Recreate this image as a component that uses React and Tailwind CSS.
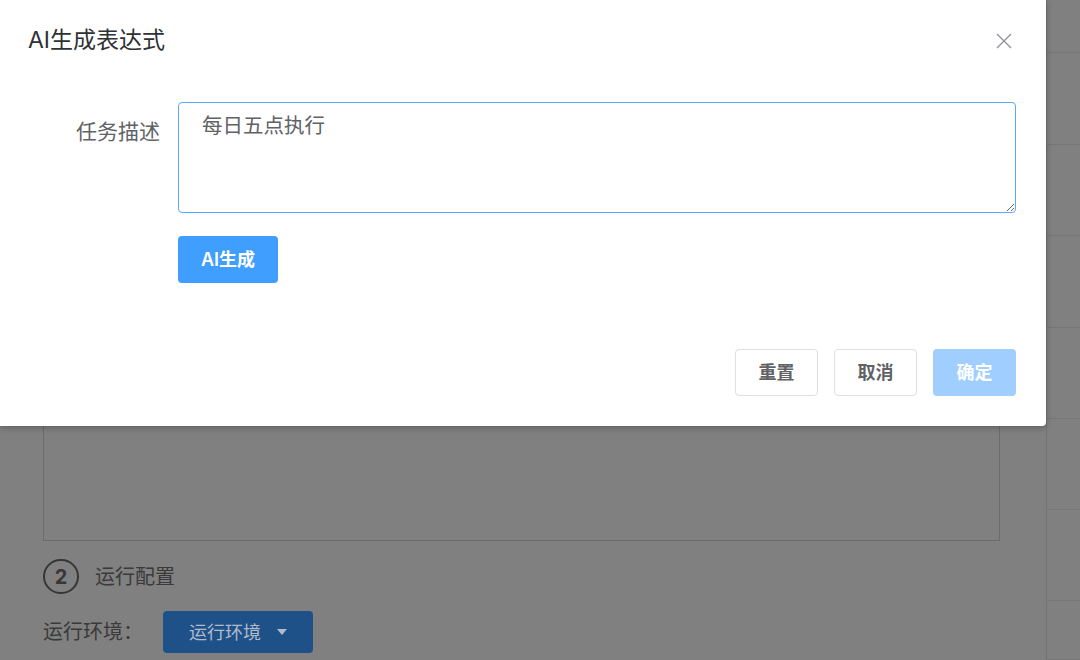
import React from "react";

const font = { fontFamily: '"Inter", "Liberation Sans", "Noto Sans CJK SC", sans-serif' };

function SideRows() {
  const rows = [54, 93, 92, 93, 93, 92, 92, 60];
  return (
    <div className="flex w-[34px] flex-col border-l border-[#737373]">
      {rows.map((h, i) => (
        <div key={i} className="border-b border-[#777777]" style={{ height: h }} />
      ))}
    </div>
  );
}

function Modal() {
  return (
    <div className="absolute left-0 top-0 h-[426px] w-[1046px] rounded-br bg-white shadow-[0_2px_6px_rgba(0,0,0,0.25)]">
      <div className="flex items-center justify-between pl-[28px] pr-[34px] pt-[25px]">
        <h2 className="text-[23px] leading-[30px] text-[#303133]">AI生成表达式</h2>
        <svg width="16" height="16" viewBox="0 0 16 16" className="mt-[2px]">
          <path d="M1 1 L15 15 M15 1 L1 15" stroke="#909399" strokeWidth="1.4" />
        </svg>
      </div>

      <div className="mt-[47px] flex pr-[30px]">
        <label className="w-[160px] shrink-0 pt-[16px] text-right text-[21px] leading-[28px] text-[#606266]">
          任务描述
        </label>
        <div className="ml-[18px] flex flex-1 flex-col">
          <textarea
            readOnly
            value="每日五点执行"
            className="h-[111px] w-full resize-y rounded border border-[#5aa9ff] px-[23px] py-[9px] text-[20.5px] leading-[28px] text-[#606266] outline-none"
            style={font}
          />
          <div className="mt-[23px]">
            <button className="h-[47px] w-[100px] rounded bg-[#409eff] text-[18px] font-semibold text-white">
              AI生成
            </button>
          </div>
        </div>
      </div>

      <div className="mt-[66px] flex justify-end gap-[16px] pr-[30px]">
        <button className="h-[47px] w-[83px] rounded border border-[#dcdfe6] bg-white text-[18px] font-semibold text-[#606266]">
          重置
        </button>
        <button className="h-[47px] w-[83px] rounded border border-[#dcdfe6] bg-white text-[18px] font-semibold text-[#606266]">
          取消
        </button>
        <button className="h-[47px] w-[83px] rounded bg-[#a0cfff] text-[18px] font-semibold text-white">
          确定
        </button>
      </div>
    </div>
  );
}

export default function App() {
  return (
    <div className="relative h-[660px] w-[1080px] overflow-hidden bg-[#808080]" style={font}>
      <div className="flex h-full">
        <div className="w-[1046px] shrink-0 pl-[43px] pt-[300px]">
          <div className="h-[241px] w-[957px] border border-[#6c6c6c]" />
          <div className="mt-[18px] flex items-center gap-[16px]">
            <div className="flex h-[35px] w-[36px] items-center justify-center rounded-full border-[2px] border-[#363636] text-[20px] font-bold text-[#363636]">
              2
            </div>
            <span className="text-[20px] text-[#3a3a3a]">运行配置</span>
          </div>
          <div className="mt-[17px] flex items-center">
            <span className="w-[120px] text-[20px] text-[#3a3a3a]">运行环境：</span>
            <button className="flex h-[42px] w-[150px] items-center justify-center gap-[16px] rounded bg-[#1f5189] text-[18px] text-[#b0bccb]">
              运行环境
              <svg width="10" height="6" viewBox="0 0 10 6">
                <path d="M0 0 L10 0 L5 6 Z" fill="#b0bccb" />
              </svg>
            </button>
          </div>
        </div>
        <SideRows />
      </div>
      <Modal />
    </div>
  );
}
